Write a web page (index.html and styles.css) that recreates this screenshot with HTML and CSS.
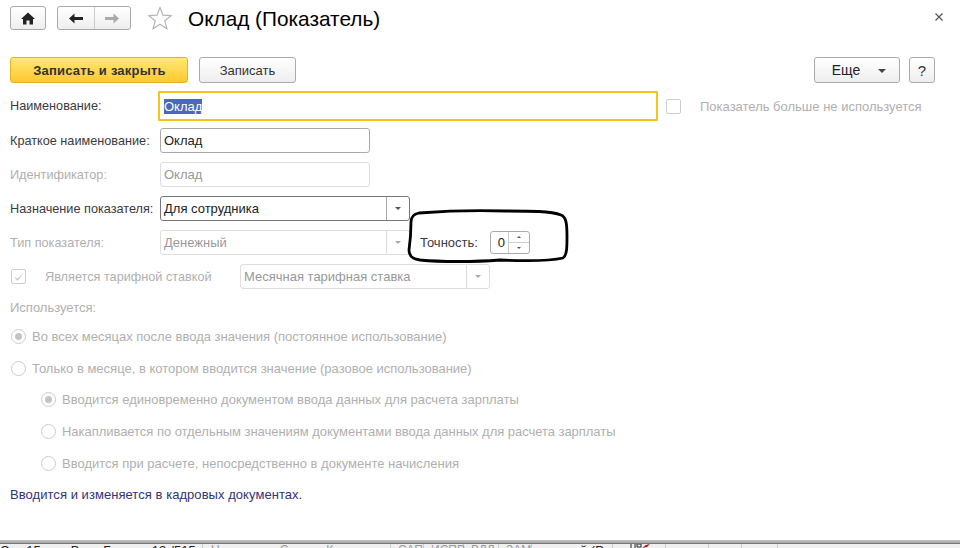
FILE: index.html
```html
<!DOCTYPE html>
<html lang="ru">
<head>
<meta charset="utf-8">
<title>Оклад (Показатель)</title>
<link rel="stylesheet" href="styles.css">
</head>
<body>
<div class="page">
  <header class="top">
    <button class="btn home"><svg width="14" height="13" viewBox="0 0 14 13"><path d="M7 0.5 L14 7 H12 V12.5 H8.5 V8.5 H5.5 V12.5 H2 V7 H0 Z" fill="#222"/></svg></button>
    <div class="btn nav">
      <span class="nav-cell"><svg width="14" height="11" viewBox="0 0 14 11"><path d="M0 5.5 L5.5 0.5 V4 H14 V7 H5.5 V10.5 Z" fill="#222"/></svg></span>
      <span class="nav-cell"><svg width="14" height="11" viewBox="0 0 14 11"><path d="M14 5.5 L8.5 0.5 V4 H0 V7 H8.5 V10.5 Z" fill="#aaa"/></svg></span>
    </div>
    <svg class="star" width="24" height="24" viewBox="0 0 24 24"><path d="M12 1.5 L15 9.2 L23.2 9.6 L16.8 14.8 L19 22.8 L12 18.3 L5 22.8 L7.2 14.8 L0.8 9.6 L9 9.2 Z" fill="#fff" stroke="#b5b5b5" stroke-width="1.2"/></svg>
    <h1 class="title">Оклад (Показатель)</h1>
    <svg class="close" width="8" height="8" viewBox="0 0 8 8"><path d="M0.5 0.5 L7.5 7.5 M7.5 0.5 L0.5 7.5" stroke="#555" stroke-width="1.2"/></svg>
  </header>

  <div class="actions">
    <button class="btn primary">Записать и закрыть</button>
    <button class="btn save">Записать</button>
    <button class="btn more">Еще<i class="caret dark"></i></button>
    <button class="btn help">?</button>
  </div>

  <div class="row name-row">
    <label class="lbl">Наименование:</label>
    <div class="field focus"><span class="sel">Оклад</span></div>
    <span class="check unused"></span>
    <span class="muted">Показатель больше не используется</span>
  </div>
  <div class="row r-short">
    <label class="lbl">Краткое наименование:</label>
    <div class="field w210">Оклад</div>
  </div>
  <div class="row r-id">
    <label class="lbl muted">Идентификатор:</label>
    <div class="field w210 off">Оклад</div>
  </div>
  <div class="row r-purpose">
    <label class="lbl">Назначение показателя:</label>
    <div class="field w250 strong">Для сотрудника<span class="drop"><i class="caret"></i></span></div>
  </div>
  <div class="row r-type">
    <label class="lbl muted">Тип показателя:</label>
    <div class="field w250 off">Денежный<span class="drop"><i class="caret light"></i></span></div>
    <label class="prec-lbl">Точность:</label>
    <div class="spin"><span class="spin-val">0</span><span class="spin-btns"><span class="spin-b"><i class="mini up"></i></span><span class="spin-b"><i class="mini"></i></span></span></div>
  </div>
  <div class="row r-rate">
    <span class="check"><svg width="13" height="12" viewBox="0 0 13 12"><path d="M2 6 L5.5 10 L12 1.5 L5.5 7.5 Z" fill="#c9c9c9"/></svg></span>
    <span class="muted rate-text">Является тарифной ставкой</span>
    <div class="field w250 off">Месячная тарифная ставка<span class="drop"><i class="caret light"></i></span></div>
  </div>
  <div class="used muted">Используется:</div>

  <div class="radio r1"><span class="dot on"></span><span class="muted">Во всех месяцах после ввода значения (постоянное использование)</span></div>
  <div class="radio r2"><span class="dot"></span><span class="muted">Только в месяце, в котором вводится значение (разовое использование)</span></div>
  <div class="radio r3 sub"><span class="dot on"></span><span class="muted">Вводится единовременно документом ввода данных для расчета зарплаты</span></div>
  <div class="radio r3 sub"><span class="dot"></span><span class="muted tight">Накапливается по отдельным значениям документами ввода данных для расчета зарплаты</span></div>
  <div class="radio r3 sub"><span class="dot"></span><span class="muted">Вводится при расчете, непосредственно в документе начисления</span></div>

  <p class="note">Вводится и изменяется в кадровых документах.</p>

  <footer class="taskbar">
    <span class="cell c1"><span class="t">Стр 15</span><span class="t g1">В</span><span class="t g2">Б</span><span class="t g3">12</span><span class="t g4">/515</span></span>
    <span class="cell c3"><span class="t dim g5">Н</span><span class="t dim g6">С</span><span class="t dim g7">К</span></span>
    <span class="cell c4"><span class="t dim pad">САП</span></span>
    <span class="cell c5"><span class="t dim pad">ИСПР</span></span>
    <span class="cell c6"><span class="t dim pad">ВДЛ</span></span>
    <span class="cell c7"><span class="t dim pad">ЗАМ</span></span>
    <span class="cell c8"><span class="t g8">й (Р</span></span>
    <span class="cell c9"><svg class="tray" width="20" height="4" viewBox="0 0 20 4"><path d="M1 0 V4 M5 0 V4 M7 0 H11 V3 H7 Z" stroke="#222" fill="none"/><path d="M12 4 L16 1 L20 0 L17 3 Z" fill="#a01818"/></svg></span>
    <span class="cell c10"></span>
    <span class="cell c11"></span>
    <span class="cell c12"></span>
  </footer>

  <svg class="oval" width="170" height="60" viewBox="0 0 170 60"><path d="M14 5 C40 3 70 2 100 3 C125 3 146 3 156 7 C161 9 162 15 162 28 C162 40 162 47 158 50 C145 53 120 53 95 52 C70 54 35 54 15 52 C7 51 4 48 4 42 C5 35 6 25 6 14 C6 9 9 6 14 5 Z" fill="none" stroke="#000" stroke-width="2.8"/></svg>
</div>
</body>
</html>
```
FILE: styles.css
```css
* { box-sizing: border-box; }
html, body { margin: 0; padding: 0; background: #fff; }
body { font: 13px "Liberation Sans", Arial, sans-serif; color: #3a3a44; }
.page { position: relative; width: 960px; height: 548px; overflow: hidden; }

.btn {
  display: inline-flex; align-items: center; justify-content: center;
  padding: 0; height: 26px; font: 13px "Liberation Sans", Arial, sans-serif; color: #333;
  border: 1px solid #aaa; border-radius: 3px;
  background: linear-gradient(#fff, #eee);
}

.top { display: flex; align-items: center; height: 24px; margin-top: 6px; padding-left: 10px; }
.home { width: 36px; height: 24px; }
.nav { width: 74px; height: 24px; margin-left: 11px; }
.nav-cell { flex: 1; height: 100%; display: flex; align-items: center; justify-content: center; }
.nav-cell + .nav-cell { border-left: 1px solid #ccc; }
.star { margin-left: 17px; }
.title { margin: 0 0 0 16px; font-size: 20.8px; font-weight: 400; color: #000; line-height: 24px; flex: 1; position: relative; top: 1px; }
.close { margin-right: 17px; position: relative; top: -1px; }

.actions { display: flex; height: 26px; margin-top: 27px; padding-left: 10px; }
.primary { width: 178px; padding-left: 1px; font-weight: 700; letter-spacing: .2px; color: #333; border-color: #e6b422; background: linear-gradient(#ffe975, #fdc82f); }
.save { width: 97px; margin-left: 11px; }
.more { width: 86px; margin-left: 518px; font-size: 14px; color: #222; position: relative; padding-right: 22px; }
.help { width: 26px; margin-left: 9px; font-size: 15px; }
.caret { display: inline-block; width: 0; height: 0; border: 3px solid transparent; border-top: 3px solid #555; border-bottom: 0; }
.caret.dark { position: absolute; right: 13px; top: 11px; border-width: 4px 4px 0; border-top-color: #444; }
.caret.light { border-top-color: #aaa; }

.row { display: flex; align-items: center; padding-left: 10px; }
.lbl { width: 150px; flex: none; white-space: nowrap; font-size: 12.7px; }
.muted { color: #b0b0b0; }
.tight { letter-spacing: -.04px; }
.field {
  position: relative; display: flex; align-items: center; height: 25px; padding-left: 3px;
  border: 1px solid #aaa; border-radius: 3px; color: #222; background: #fff;
}
.field.off { border-color: #ddd; color: #999; }
.field.strong { border-color: #777; }
.field.focus { width: 500px; height: 30px; margin-left: -2px; padding-left: 4px; border: 2px solid #f5c518; border-radius: 0; }
.sel { background: #4a69bd; color: #fff; line-height: 15px; }
.w210 { width: 210px; }
.w250 { width: 250px; }
.drop { position: absolute; right: 0; top: 0; bottom: 0; width: 23px; display: flex; align-items: center; justify-content: center; border-left: 1px solid #ddd; }
.strong .drop { border-left-color: #aaa; }

.name-row { height: 30px; margin-top: 8px; }
.check { width: 15px; height: 15px; flex: none; border: 1px solid #ccc; border-radius: 2px; display: flex; align-items: center; justify-content: center; background: #fff; }
.unused { margin-left: 8px; }
.name-row .muted { margin-left: 19px; }
.r-short { margin-top: 7px; height: 25px; }
.r-id { margin-top: 9px; height: 25px; }
.r-purpose { margin-top: 9px; height: 25px; }
.r-type { margin-top: 9px; height: 25px; }
.prec-lbl { margin-left: 10px; width: 70px; color: #3a3a44; }
.spin { display: flex; width: 40px; height: 23px; border: 1px solid #aaa; border-radius: 3px; color: #222; }
.spin-val { width: 14px; text-align: right; line-height: 21px; }
.spin-btns { flex: 1; margin-left: 3px; display: flex; flex-direction: column; border-left: 1px solid #ccc; }
.spin-b { flex: 1; display: flex; align-items: center; justify-content: center; }
.spin-b + .spin-b { border-top: 1px solid #ccc; }
.mini { width: 0; height: 0; border: 2px solid transparent; border-top: 2px solid #555; border-bottom: 0; }
.mini.up { border-top: 0; border-bottom: 2px solid #555; }

.r-rate { margin-top: 9px; height: 25px; padding-left: 11px; }
.rate-text { margin-left: 19px; width: 195px; font-size: 12.7px; white-space: nowrap; }
.used { margin: 11px 0 0 10px; height: 16px; line-height: 16px; }

.radio { display: flex; align-items: center; height: 16px; padding-left: 11px; }
.r1 { margin-top: 12px; }
.r2 { margin-top: 16px; }
.r3 { margin-top: 16px; }
.sub { padding-left: 41px; }
.r2 + .sub { margin-top: 15px; }
.dot { position: relative; width: 15px; height: 15px; flex: none; margin-right: 6px; border: 1px solid #ccc; border-radius: 50%; background: #fff; }
.dot.on::after { content: ""; position: absolute; left: 3px; top: 3px; width: 7px; height: 7px; border-radius: 50%; background: #c4c4c4; }

.note { margin: 16px 0 0 10px; line-height: 16px; letter-spacing: .05px; color: #33337a; }

.taskbar { position: absolute; left: 0; right: 0; top: 540px; height: 8px; overflow: hidden; display: flex; padding-top: 4px; background: linear-gradient(#c4c4c4 0, #a4a4a4 3px, #777 3px, #777 4px, #f0f0f0 4px); }
.cell { display: flex; flex: none; height: 4px; margin-right: 5px; border-right: 1px solid #ccc; }
.t { font-size: 13px; line-height: 15px; height: 15px; color: #222; white-space: nowrap; margin-top: -1px; }
.dim { color: #999; font-size: 12px; }
.pad { margin-left: 2px; }
.c1 { width: 203px; }
.c3 { width: 183px; }
.c4 { width: 28px; }
.c5 { width: 35px; }
.c6 { width: 30px; }
.c7 { width: 28px; }
.c8 { width: 76px; }
.c9 { width: 48px; }
.c10 { width: 38px; }
.c11 { width: 28px; }
.c12 { width: 31px; }
.g1 { margin-left: 30px; } .g2 { margin-left: 24px; } .g3 { margin-left: 40px; } .g4 { margin-left: 4px; }
.g5 { margin-left: 3px; } .g6 { margin-left: 60px; } .g7 { margin-left: 38px; }
.g8 { margin-left: 43px; }
.tray { margin-left: 12px; }

.oval { position: absolute; left: 405px; top: 208px; }
```
